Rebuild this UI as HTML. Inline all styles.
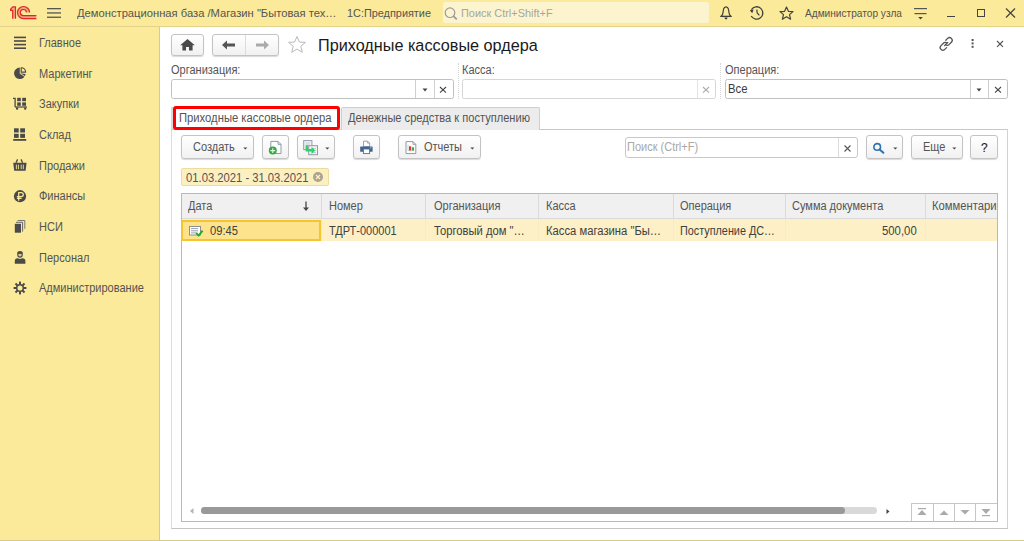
<!DOCTYPE html>
<html><head><meta charset="utf-8">
<style>
*{box-sizing:border-box;margin:0;padding:0}
html,body{width:1024px;height:541px;overflow:hidden;background:#fff;font-family:"Liberation Sans",sans-serif}
.a{position:absolute;white-space:nowrap;line-height:1}
svg.a{overflow:visible}
</style></head><body>
<div class="a" style="left:0px;top:0px;width:1024px;height:26px;background:#fbea99"></div>
<div class="a" style="left:0px;top:26px;width:1024px;height:1px;background:#e2d28a"></div>
<svg class="a" style="left:0px;top:0px" width="42" height="26" viewBox="0 0 42 26"><path d="M10.6 10.4 L10.6 9.2 L12.7 6.9 H15.5 V18.6 H12.7 V10.4 Z" fill="#efa57a"/>
<path d="M29.6 12.4 A6.05 6.05 0 1 0 23.4 18.6 H36.2 V15.6 H23.4 A3.05 3.05 0 1 1 26.4 12.4 Z" fill="#efa57a"/>
<g stroke="#e0262a" stroke-width="1.2" fill="none" stroke-linejoin="round">
<path d="M12.7 18.8 V10.4 H10.6 V9.2 L12.7 6.9 H15.5 V18.8"/>
<path d="M29.6 12.4 A6.05 6.05 0 1 0 23.4 18.6 H36.4"/>
<path d="M26.4 12.4 A3.05 3.05 0 1 0 23.4 15.6 H36.4"/>
</g></svg>
<svg class="a" style="left:47px;top:7px" width="15" height="12" viewBox="0 0 15 12"><g fill="#555"><rect x="0" y="1" width="14" height="1.3"/><rect x="0" y="5.3" width="14" height="1.3"/><rect x="0" y="9.6" width="14" height="1.3"/></g></svg>
<div class="a" style="left:76.7px;top:8px;font-size:11.8px;color:#545454;font-weight:normal;transform-origin:0 0;transform:scaleX(0.9491);">Демонстрационная база /Магазин "Бытовая тех…</div>
<div class="a" style="left:347.0px;top:8px;font-size:11.5px;color:#545454;font-weight:normal;transform-origin:0 0;transform:scaleX(0.9461);">1С:Предприятие</div>
<div class="a" style="left:443px;top:2px;width:266px;height:21px;background:#fcf4cf;border-radius:2px"></div>
<svg class="a" style="left:444px;top:7px" width="14" height="13" viewBox="0 0 14 13"><circle cx="6" cy="5.7" r="4.8" fill="none" stroke="#9a9a9a" stroke-width="1.2"/><path d="M9.4 9.2 L12.8 12.4" stroke="#9a9a9a" stroke-width="1.8"/></svg>
<div class="a" style="left:461.1px;top:8px;font-size:11.8px;color:#a6a6a0;font-weight:normal;transform-origin:0 0;transform:scaleX(0.9261);">Поиск Ctrl+Shift+F</div>
<svg class="a" style="left:710px;top:0px" width="30" height="26" viewBox="0 0 30 26"><path d="M16 6.8 Q14.2 6.8 13.6 9 L12.8 13.6 Q12.4 15.4 11 16.3 H21 Q19.6 15.4 19.2 13.6 L18.4 9 Q17.8 6.8 16 6.8 Z" fill="none" stroke="#3f3f3f" stroke-width="1.2" stroke-linejoin="round"/><path d="M10.4 16.5 H21.6" stroke="#3f3f3f" stroke-width="1.1"/><path d="M14.4 17.6 H17.6 Q17.2 19.5 16 19.5 Q14.8 19.5 14.4 17.6 Z" fill="#3f3f3f"/></svg>
<svg class="a" style="left:740px;top:0px" width="30" height="26" viewBox="0 0 30 26"><path d="M11.4 9.6 A6.2 6.2 0 1 1 11.2 16" fill="none" stroke="#3f3f3f" stroke-width="1.3"/><path d="M9.8 10.2 L13.6 9.4 L12.2 13.2 Z" fill="#3f3f3f"/><path d="M16.8 9.6 L17.2 13 L19.4 15.4" fill="none" stroke="#3f3f3f" stroke-width="1.2"/></svg>
<svg class="a" style="left:779px;top:6px" width="15" height="14" viewBox="0 0 15 14"><path d="M7.5 1 L9.4 5.3 L14 5.6 L10.5 8.6 L11.6 13.2 L7.5 10.7 L3.4 13.2 L4.5 8.6 L1 5.6 L5.6 5.3 Z" fill="none" stroke="#444" stroke-width="1.2" stroke-linejoin="round"/></svg>
<div class="a" style="left:804.6px;top:8px;font-size:10.8px;color:#545454;font-weight:normal;transform-origin:0 0;transform:scaleX(0.9378);">Администратор узла</div>
<svg class="a" style="left:913px;top:7px" width="15" height="13" viewBox="0 0 15 13"><rect x="1" y="1" width="13" height="1.2" fill="#555"/><rect x="1.5" y="6" width="12" height="1.2" fill="#555"/><path d="M5.2 10 H9.8 L7.5 12.4 Z" fill="#444"/></svg>
<div class="a" style="left:947px;top:16px;width:8px;height:1.2px;background:#444"></div>
<div class="a" style="left:977px;top:9px;width:8px;height:8px;border:1.2px solid #444"></div>
<svg class="a" style="left:1005px;top:8px" width="11" height="10" viewBox="0 0 11 10"><path d="M1 0.5 L10 9.5 M10 0.5 L1 9.5" stroke="#444" stroke-width="1.2"/></svg>
<div class="a" style="left:0px;top:27px;width:159px;height:514px;background:#fbea99"></div>
<div class="a" style="left:159px;top:27px;width:1px;height:514px;background:#dccb86"></div>
<div class="a" style="left:0px;top:540px;width:1024px;height:1px;background:#dccb85"></div>
<div class="a" style="left:38.8px;top:37px;font-size:12.0px;color:#545454;font-weight:normal;transform-origin:0 0;transform:scaleX(0.9165);">Главное</div>
<div class="a" style="left:38.8px;top:68px;font-size:12.0px;color:#545454;font-weight:normal;transform-origin:0 0;transform:scaleX(0.9167);">Маркетинг</div>
<div class="a" style="left:38.8px;top:98px;font-size:12.0px;color:#545454;font-weight:normal;transform-origin:0 0;transform:scaleX(0.9168);">Закупки</div>
<div class="a" style="left:38.8px;top:129px;font-size:12.0px;color:#545454;font-weight:normal;transform-origin:0 0;transform:scaleX(0.9168);">Склад</div>
<div class="a" style="left:38.8px;top:160px;font-size:12.0px;color:#545454;font-weight:normal;transform-origin:0 0;transform:scaleX(0.9168);">Продажи</div>
<div class="a" style="left:38.8px;top:190px;font-size:12.0px;color:#545454;font-weight:normal;transform-origin:0 0;transform:scaleX(0.9166);">Финансы</div>
<div class="a" style="left:38.8px;top:221px;font-size:12.0px;color:#545454;font-weight:normal;transform-origin:0 0;transform:scaleX(0.9164);">НСИ</div>
<div class="a" style="left:38.8px;top:252px;font-size:12.0px;color:#545454;font-weight:normal;transform-origin:0 0;transform:scaleX(0.9166);">Персонал</div>
<div class="a" style="left:38.8px;top:282px;font-size:12.0px;color:#545454;font-weight:normal;transform-origin:0 0;transform:scaleX(0.9167);">Администрирование</div>
<svg class="a" style="left:0px;top:0px" width="40" height="320" viewBox="0 0 40 320"><rect x="14" y="36.6" width="12" height="1.6" fill="#4a4a4a"/><rect x="14" y="40.2" width="12" height="1.6" fill="#4a4a4a"/><rect x="14" y="43.8" width="12" height="1.6" fill="#4a4a4a"/><rect x="14" y="47.4" width="12" height="1.6" fill="#4a4a4a"/><path d="M19.8 73.3 V67.5 A5.8 5.8 0 1 0 25.6 73.9 Z" fill="#4a4a4a"/><path d="M19.8 73.3 L25.6 77.0" stroke="#fbea99" stroke-width="0.9"/><path d="M21.2 72.1 V67.7 A4.4 4.4 0 0 1 25.6 72.1 Z" fill="none" stroke="#4a4a4a" stroke-width="1.1"/><path d="M13 98.4 H15.1 V107" fill="none" stroke="#4a4a4a" stroke-width="1.3"/><rect x="17.2" y="97.8" width="3.6" height="3.4" fill="#4a4a4a"/><rect x="22.2" y="97.8" width="3.8" height="3.4" fill="#4a4a4a"/><rect x="17.2" y="102.4" width="3.6" height="3.4" fill="#4a4a4a"/><rect x="22.2" y="102.4" width="3.8" height="3.4" fill="#4a4a4a"/><rect x="15" y="106.4" width="12" height="1.2" fill="#4a4a4a"/><rect x="16" y="107.2" width="2.2" height="2.6" rx="0.8" fill="#4a4a4a"/><rect x="24.1" y="107.2" width="2.2" height="2.6" rx="0.8" fill="#4a4a4a"/><rect x="14" y="128.3" width="4.7" height="4.2" fill="#4a4a4a"/><rect x="20.2" y="128.3" width="4.8" height="4.2" fill="#4a4a4a"/><rect x="14" y="133.8" width="4.7" height="4.1" fill="#4a4a4a"/><rect x="20.2" y="133.8" width="4.8" height="4.1" fill="#4a4a4a"/><rect x="13.2" y="139" width="13" height="1.8" fill="#4a4a4a"/><path d="M17.6 159.4 L16 162.8 M21 159.4 L22.6 162.8" stroke="#4a4a4a" stroke-width="1.3"/><path d="M13.2 162.8 H26.6 L25.6 170.8 H14.2 Z" fill="#4a4a4a"/><path d="M16.4 164.6 V169.2 M18.4 164.6 V169.2 M21.2 164.6 V169.2 M23.3 164.6 V169.2" stroke="#fbea99" stroke-width="0.9"/><circle cx="20" cy="196.2" r="6.1" fill="#4a4a4a"/><path d="M18.7 200.8 V192.6 H21.3 A2 2 0 0 1 21.3 196.6 H16.9 M16.9 198.3 H21.6" fill="none" stroke="#fbea99" stroke-width="1.2"/><path d="M17.6 220.5 H24.8 V228.8" fill="none" stroke="#777" stroke-width="1"/><path d="M16 222.3 H22.6 V231.6" fill="none" stroke="#666" stroke-width="1"/><rect x="14.8" y="223.8" width="6.2" height="8.9" fill="#4a4a4a"/><path d="M17.2 254.6 V252.8 Q17.2 251 20 251 Q22.8 251 22.8 252.8 V254.6 Q22.8 257.8 20 257.8 Q17.2 257.8 17.2 254.6 Z" fill="#4a4a4a"/><path d="M18.2 254.2 Q20 253.2 21.8 254.2 Q21.8 256.6 20 256.6 Q18.2 256.6 18.2 254.2 Z" fill="#fbea99" opacity="0.8"/><path d="M14.8 263.8 V261 Q14.8 258.6 17.6 258.3 L20 259 L22.4 258.3 Q25.4 258.6 25.4 261 V263.8 Z" fill="#4a4a4a"/><rect x="19" y="281.6" width="2" height="3" transform="rotate(0 20 288)" fill="#4a4a4a"/><rect x="19" y="281.6" width="2" height="3" transform="rotate(45 20 288)" fill="#4a4a4a"/><rect x="19" y="281.6" width="2" height="3" transform="rotate(90 20 288)" fill="#4a4a4a"/><rect x="19" y="281.6" width="2" height="3" transform="rotate(135 20 288)" fill="#4a4a4a"/><rect x="19" y="281.6" width="2" height="3" transform="rotate(180 20 288)" fill="#4a4a4a"/><rect x="19" y="281.6" width="2" height="3" transform="rotate(225 20 288)" fill="#4a4a4a"/><rect x="19" y="281.6" width="2" height="3" transform="rotate(270 20 288)" fill="#4a4a4a"/><rect x="19" y="281.6" width="2" height="3" transform="rotate(315 20 288)" fill="#4a4a4a"/><circle cx="20" cy="288" r="3.3" fill="none" stroke="#4a4a4a" stroke-width="1.5"/></svg>
<div class="a" style="left:171px;top:34px;width:33px;height:22px;border:1px solid #c3c3c3;border-radius:3px;background:linear-gradient(#ffffff,#f1f1f1);box-shadow:0 1px 1px rgba(0,0,0,0.15)"></div>
<svg class="a" style="left:179px;top:38px" width="17" height="14" viewBox="0 0 17 14"><path d="M8.5 1 L1.2 7.2 H3.4 V12.5 H7 V9 H10 V12.5 H13.6 V7.2 H15.8 Z" fill="#4a4a4a"/></svg>
<div class="a" style="left:212px;top:34px;width:67px;height:22px;border:1px solid #c3c3c3;border-radius:3px;background:linear-gradient(#ffffff,#f1f1f1);box-shadow:0 1px 1px rgba(0,0,0,0.15)"></div>
<div class="a" style="left:245px;top:35px;width:1px;height:20px;background:#dcdcdc"></div>
<svg class="a" style="left:221px;top:39px" width="16" height="12" viewBox="0 0 16 12"><path d="M1 6 L6 1.5 V4.6 H14 V7.4 H6 V10.5 Z" fill="#555"/></svg>
<svg class="a" style="left:254px;top:39px" width="16" height="12" viewBox="0 0 16 12"><path d="M15 6 L10 1.5 V4.6 H2 V7.4 H10 V10.5 Z" fill="#aaa"/></svg>
<svg class="a" style="left:287px;top:35px" width="20" height="19" viewBox="0 0 20 19"><path d="M10 1.5 L12.4 7 L18.4 7.4 L13.8 11.3 L15.3 17.3 L10 14.1 L4.7 17.3 L6.2 11.3 L1.6 7.4 L7.6 7 Z" fill="none" stroke="#b9b9b9" stroke-width="1"/></svg>
<div class="a" style="left:318.0px;top:37px;font-size:17.4px;color:#1a1a1a;font-weight:normal;transform-origin:0 0;transform:scaleX(0.9325);">Приходные кассовые ордера</div>
<svg class="a" style="left:938px;top:36px" width="17" height="16" viewBox="0 0 17 16"><g fill="none" stroke="#555" stroke-width="1.3" stroke-linecap="round"><path d="M7.8 4.2 L9.6 2.4 A2.4 2.4 0 0 1 13.4 6.2 L11 8.6 A2.4 2.4 0 0 1 7.6 8.8"/><path d="M8.6 11.6 L6.8 13.4 A2.4 2.4 0 0 1 3 9.6 L5.4 7.2 A2.4 2.4 0 0 1 8.8 7"/><path d="M6.6 9.6 L9.8 6.4"/></g></svg>
<svg class="a" style="left:970px;top:37px" width="5" height="12" viewBox="0 0 5 12"><g fill="#555"><rect x="1.6" y="2" width="2" height="2"/><rect x="1.6" y="5.4" width="2" height="2"/><rect x="1.6" y="8.8" width="2" height="2"/></g></svg>
<svg class="a" style="left:995px;top:39px" width="10" height="10" viewBox="0 0 10 10"><path d="M2 2 L8 7.8 M8 2 L2 7.8" stroke="#555" stroke-width="1.15"/></svg>
<div class="a" style="left:170.5px;top:64px;font-size:12.0px;color:#545454;font-weight:normal;transform-origin:0 0;transform:scaleX(0.9166);">Организация:</div>
<div class="a" style="left:171px;top:79px;width:283px;height:20px;border:1px solid #c0c0c0;border-radius:2.5px;background:#fff"></div>
<div class="a" style="left:415px;top:80px;width:1px;height:18px;background:#cfcfcf"></div>
<div class="a" style="left:434px;top:80px;width:1px;height:18px;background:#cfcfcf"></div>
<svg class="a" style="left:421px;top:87px" width="8" height="6" viewBox="0 0 8 6"><path d="M1.5 1.5 H6.5 L4 4.5 Z" fill="#444"/></svg>
<svg class="a" style="left:439.3px;top:85.9px" width="8" height="8" viewBox="0 0 8 8"><path d="M1 1 L7 6.6 M7 1 L1 6.6" stroke="#444" stroke-width="1.05"/></svg>
<div class="a" style="left:458px;top:63px;width:1px;height:36px;border-left:1px dotted #d6d6d6"></div>
<div class="a" style="left:462.2px;top:64px;font-size:12.0px;color:#545454;font-weight:normal;transform-origin:0 0;transform:scaleX(0.9168);">Касса:</div>
<div class="a" style="left:462px;top:79px;width:254px;height:20px;border:1px solid #d6d6d6;border-radius:2.5px;background:#fff"></div>
<div class="a" style="left:697px;top:80px;width:1px;height:18px;background:#e4e4e4"></div>
<svg class="a" style="left:702.2px;top:86px" width="8" height="8" viewBox="0 0 8 8"><path d="M1 1 L7 6.6 M7 1 L1 6.6" stroke="#aaa" stroke-width="1.05"/></svg>
<div class="a" style="left:720px;top:63px;width:1px;height:36px;border-left:1px dotted #d6d6d6"></div>
<div class="a" style="left:725.2px;top:64px;font-size:12.0px;color:#545454;font-weight:normal;transform-origin:0 0;transform:scaleX(0.9167);">Операция:</div>
<div class="a" style="left:725px;top:79px;width:283px;height:20px;border:1px solid #c0c0c0;border-radius:2.5px;background:#fff"></div>
<div class="a" style="left:970px;top:80px;width:1px;height:18px;background:#cfcfcf"></div>
<div class="a" style="left:988px;top:80px;width:1px;height:18px;background:#cfcfcf"></div>
<svg class="a" style="left:975px;top:87px" width="8" height="6" viewBox="0 0 8 6"><path d="M1.5 1.5 H6.5 L4 4.5 Z" fill="#444"/></svg>
<svg class="a" style="left:993.7px;top:85.9px" width="8" height="8" viewBox="0 0 8 8"><path d="M1 1 L7 6.6 M7 1 L1 6.6" stroke="#444" stroke-width="1.05"/></svg>
<div class="a" style="left:727.8px;top:83px;font-size:12px;color:#3a3a3a;font-weight:normal;transform-origin:0 0;transform:scaleX(0.9426);">Все</div>
<div class="a" style="left:171px;top:129px;width:837px;height:400px;border:1px solid #d2d2d2;border-left-color:#dcdcdc;border-bottom-color:#c4c4c4;border-top-color:#c8c8c8;background:#fff"></div>
<div class="a" style="left:171px;top:107px;width:2px;height:22px;background:#d9d9d9"></div>
<div class="a" style="left:341px;top:107px;width:199px;height:23px;border:1px solid #cfcfcf;border-bottom:none;border-radius:2px 2px 0 0;background:#ececec"></div>
<div class="a" style="left:173px;top:106px;width:167px;height:24px;border:3px solid #ff0000;border-radius:3px;background:#fff"></div>
<div class="a" style="left:178.7px;top:112px;font-size:12.272727272727273px;color:#545454;font-weight:normal;transform-origin:0 0;transform:scaleX(0.9167);">Приходные кассовые ордера</div>
<div class="a" style="left:348.2px;top:112px;font-size:12.109090909090908px;color:#545454;font-weight:normal;transform-origin:0 0;transform:scaleX(0.9168);">Денежные средства к поступлению</div>
<div class="a" style="left:181px;top:135px;width:73px;height:24px;border:1px solid #c3c3c3;border-radius:3px;background:linear-gradient(#ffffff,#f1f1f1);box-shadow:0 1px 1px rgba(0,0,0,0.15)"></div>
<div class="a" style="left:193.2px;top:141px;font-size:12.0px;color:#545454;font-weight:normal;transform-origin:0 0;transform:scaleX(0.9168);">Создать</div>
<svg class="a" style="left:242.6px;top:146.6px" width="6" height="4" viewBox="0 0 6 4"><path d="M0.3 0.4 H4.3 L2.3 2.6 Z" fill="#444"/></svg>
<div class="a" style="left:262px;top:135px;width:27px;height:24px;border:1px solid #c3c3c3;border-radius:3px;background:linear-gradient(#ffffff,#f1f1f1);box-shadow:0 1px 1px rgba(0,0,0,0.15)"></div>
<svg class="a" style="left:262px;top:134px" width="26" height="24" viewBox="0 0 26 24"><path d="M8.8 7.4 H16 L19 10.4 V19.5 H8.8 Z" fill="#fdfdfd" stroke="#8e9bab" stroke-width="1"/><path d="M16 7.4 V10.4 H19" fill="none" stroke="#8e9bab" stroke-width="0.9"/><circle cx="10.8" cy="16.6" r="4" fill="#2fae3f"/><path d="M10.8 14.2 V19 M8.4 16.6 H13.2" stroke="#e8f8ea" stroke-width="1.1"/></svg>
<div class="a" style="left:297px;top:135px;width:38px;height:24px;border:1px solid #c3c3c3;border-radius:3px;background:linear-gradient(#ffffff,#f1f1f1);box-shadow:0 1px 1px rgba(0,0,0,0.15)"></div>
<svg class="a" style="left:297px;top:134px" width="36" height="24" viewBox="0 0 36 24"><rect x="6.7" y="6.6" width="8.2" height="9" fill="#f4f4f4" stroke="#8e9bab" stroke-width="1"/><path d="M8.5 9 H13 M8.5 11 H13 M8.5 13 H13" stroke="#b8c2cc" stroke-width="0.8"/><rect x="11.7" y="11.7" width="8.8" height="9" fill="#f4f4f4" stroke="#8e9bab" stroke-width="1"/><path d="M14.5 14.5 H19 M14.5 16.5 H19 M14.5 18.5 H19" stroke="#b8c2cc" stroke-width="0.8"/><path d="M8.6 11.2 H11 V15 H14.6 V12.8 L18.2 16.4 L14.6 20 V17.6 H8.6 Z" fill="#2ed06a"/></svg>
<svg class="a" style="left:324.6px;top:146.6px" width="6" height="4" viewBox="0 0 6 4"><path d="M0.3 0.4 H4.3 L2.3 2.6 Z" fill="#444"/></svg>
<div class="a" style="left:353px;top:135px;width:27px;height:24px;border:1px solid #c3c3c3;border-radius:3px;background:linear-gradient(#ffffff,#f1f1f1);box-shadow:0 1px 1px rgba(0,0,0,0.15)"></div>
<svg class="a" style="left:350px;top:134px" width="30" height="24" viewBox="0 0 30 24"><path d="M13.5 7.2 H17.6 L19.6 9.2 V12.6 H13.5 Z" fill="#fff" stroke="#8e9bab" stroke-width="0.9"/><path d="M17.6 7.2 V9.2 H19.6" fill="none" stroke="#8e9bab" stroke-width="0.8"/><path d="M10.8 12.6 H22 Q22.6 12.6 22.6 13.2 V17.2 Q22.6 17.8 22 17.8 H10.8 Q10.2 17.8 10.2 17.2 V13.2 Q10.2 12.6 10.8 12.6 Z" fill="#3e6591"/><circle cx="20.8" cy="13.8" r="0.6" fill="#dfe8f0"/><rect x="13.4" y="15" width="6.2" height="4.6" fill="#fff" stroke="#4c729a" stroke-width="0.9"/></svg>
<div class="a" style="left:398px;top:135px;width:83px;height:24px;border:1px solid #c3c3c3;border-radius:3px;background:linear-gradient(#ffffff,#f1f1f1);box-shadow:0 1px 1px rgba(0,0,0,0.15)"></div>
<svg class="a" style="left:400px;top:134px" width="22" height="24" viewBox="0 0 22 24"><path d="M6 7.6 H13 L15.8 10.4 V19.6 H6 Z" fill="#fdfdfd" stroke="#8e9bab" stroke-width="1"/><path d="M13 7.6 V10.4 H15.8" fill="none" stroke="#8e9bab" stroke-width="0.9"/><path d="M8 10.6 V16.6 H14.6" fill="none" stroke="#b9b9b9" stroke-width="0.6"/><rect x="9" y="12.3" width="2.1" height="4.2" fill="#e8322a"/><rect x="11.9" y="13.3" width="2.1" height="3.2" fill="#36a844"/></svg>
<div class="a" style="left:424.4px;top:141px;font-size:12.0px;color:#545454;font-weight:normal;transform-origin:0 0;transform:scaleX(0.9168);">Отчеты</div>
<svg class="a" style="left:469.6px;top:146.6px" width="6" height="4" viewBox="0 0 6 4"><path d="M0.3 0.4 H4.3 L2.3 2.6 Z" fill="#444"/></svg>
<div class="a" style="left:625px;top:137px;width:233px;height:21px;border:1px solid #c8c8c8;border-radius:3px;background:#fff"></div>
<div class="a" style="left:838px;top:138px;width:1px;height:19px;background:#dcdcdc"></div>
<div class="a" style="left:627.4px;top:141px;font-size:12.0px;color:#a8a8a8;font-weight:normal;transform-origin:0 0;transform:scaleX(0.9168);">Поиск (Ctrl+F)</div>
<svg class="a" style="left:843px;top:144px" width="9" height="9" viewBox="0 0 9 9"><path d="M1.5 1.5 L7.5 7.5 M7.5 1.5 L1.5 7.5" stroke="#555" stroke-width="1.1"/></svg>
<div class="a" style="left:866px;top:135px;width:37px;height:24px;border:1px solid #c3c3c3;border-radius:3px;background:linear-gradient(#ffffff,#f1f1f1);box-shadow:0 1px 1px rgba(0,0,0,0.15)"></div>
<svg class="a" style="left:872px;top:142px" width="14" height="12" viewBox="0 0 14 12"><circle cx="5.2" cy="4.9" r="3.3" fill="none" stroke="#2f72b4" stroke-width="1.6"/><path d="M7.6 7.4 L11.4 10.8" stroke="#2f72b4" stroke-width="2" stroke-linecap="round"/></svg>
<svg class="a" style="left:892.6px;top:146.6px" width="6" height="4" viewBox="0 0 6 4"><path d="M0.3 0.4 H4.3 L2.3 2.6 Z" fill="#444"/></svg>
<div class="a" style="left:911px;top:135px;width:52px;height:24px;border:1px solid #c3c3c3;border-radius:3px;background:linear-gradient(#ffffff,#f1f1f1);box-shadow:0 1px 1px rgba(0,0,0,0.15)"></div>
<div class="a" style="left:922.9px;top:141px;font-size:12.0px;color:#545454;font-weight:normal;transform-origin:0 0;transform:scaleX(0.9168);">Еще</div>
<svg class="a" style="left:951.6px;top:146.6px" width="6" height="4" viewBox="0 0 6 4"><path d="M0.3 0.4 H4.3 L2.3 2.6 Z" fill="#444"/></svg>
<div class="a" style="left:970px;top:135px;width:28px;height:24px;border:1px solid #c3c3c3;border-radius:3px;background:linear-gradient(#ffffff,#f1f1f1);box-shadow:0 1px 1px rgba(0,0,0,0.15)"></div>
<div class="a" style="left:980.6px;top:141px;font-size:13.2px;color:#222;font-weight:normal;transform-origin:0 0;transform:scaleX(0.8987);-webkit-text-stroke:0.15px #222">?</div>
<div class="a" style="left:181px;top:168px;width:148px;height:18px;background:#fcefc0;border:1px solid #ecdca0;border-radius:2px"></div>
<div class="a" style="left:185.7px;top:172px;font-size:12.109090909090908px;color:#545454;font-weight:normal;transform-origin:0 0;transform:scaleX(0.9294);">01.03.2021 - 31.03.2021</div>
<svg class="a" style="left:312px;top:171px" width="12" height="12" viewBox="0 0 12 12"><circle cx="6" cy="6" r="5" fill="#a9a390"/><path d="M4 4 L8 8 M8 4 L4 8" stroke="#fcefc0" stroke-width="1.3"/></svg>
<div class="a" style="left:181px;top:193px;width:817px;height:329px;border:1px solid #b9b9b9;background:#fff"></div>
<div class="a" style="left:182px;top:194px;width:815px;height:24px;background:#f0f0f0"></div>
<div class="a" style="left:182px;top:218px;width:815px;height:1px;background:#dadada"></div>
<div class="a" style="left:321px;top:194px;width:1px;height:24px;background:#dadada"></div>
<div class="a" style="left:425px;top:194px;width:1px;height:24px;background:#dadada"></div>
<div class="a" style="left:538px;top:194px;width:1px;height:24px;background:#dadada"></div>
<div class="a" style="left:673px;top:194px;width:1px;height:24px;background:#dadada"></div>
<div class="a" style="left:785px;top:194px;width:1px;height:24px;background:#dadada"></div>
<div class="a" style="left:925px;top:194px;width:1px;height:24px;background:#dadada"></div>
<div class="a" style="left:182px;top:219px;width:815px;height:22px;background:#fdf0c6"></div>
<div class="a" style="left:321px;top:219px;width:1px;height:22px;background:#f8ebc4"></div>
<div class="a" style="left:425px;top:219px;width:1px;height:22px;background:#f8ebc4"></div>
<div class="a" style="left:538px;top:219px;width:1px;height:22px;background:#f8ebc4"></div>
<div class="a" style="left:673px;top:219px;width:1px;height:22px;background:#f8ebc4"></div>
<div class="a" style="left:785px;top:219px;width:1px;height:22px;background:#f8ebc4"></div>
<div class="a" style="left:925px;top:219px;width:1px;height:22px;background:#f8ebc4"></div>
<div class="a" style="left:181px;top:220px;width:140px;height:21px;background:#fce38c;border:2px solid #f5c431"></div>
<div class="a" style="left:187.7px;top:200px;font-size:12.0px;color:#545454;font-weight:normal;transform-origin:0 0;transform:scaleX(0.9165);">Дата</div>
<svg class="a" style="left:302px;top:201px" width="8" height="11" viewBox="0 0 8 11"><path d="M4 0.5 V8" stroke="#444" stroke-width="1.3"/><path d="M1 6.5 H7 L4 10 Z" fill="#444"/></svg>
<div class="a" style="left:328.9px;top:200px;font-size:12.0px;color:#545454;font-weight:normal;transform-origin:0 0;transform:scaleX(0.9167);">Номер</div>
<div class="a" style="left:433.7px;top:200px;font-size:12.0px;color:#545454;font-weight:normal;transform-origin:0 0;transform:scaleX(0.9167);">Организация</div>
<div class="a" style="left:545.7px;top:200px;font-size:12.0px;color:#545454;font-weight:normal;transform-origin:0 0;transform:scaleX(0.9169);">Касса</div>
<div class="a" style="left:680.0px;top:200px;font-size:12.0px;color:#545454;font-weight:normal;transform-origin:0 0;transform:scaleX(0.9168);">Операция</div>
<div class="a" style="left:792.2px;top:200px;font-size:12.0px;color:#545454;font-weight:normal;transform-origin:0 0;transform:scaleX(0.9167);">Сумма документа</div>
<div class="a" style="left:925px;top:194px;width:72px;height:30px;overflow:hidden">
<div class="a" style="left:7.0px;top:6px;font-size:12.0px;color:#545454;font-weight:normal;transform-origin:0 0;transform:scaleX(0.9371);">Комментарий</div>
</div>
<svg class="a" style="left:188px;top:225px" width="17" height="13" viewBox="0 0 17 13"><rect x="1.5" y="1.5" width="11" height="8.5" fill="#fff" stroke="#8f8f8f" stroke-width="1"/><path d="M3 3.6 H10 M3 5.8 H10 M3 7.9 H8.5" stroke="#8797aa" stroke-width="0.9"/><path d="M8.2 7.9 L10.6 10.6 L14.6 5.6" fill="none" stroke="#25a82b" stroke-width="1.9" stroke-linejoin="round"/></svg>
<div class="a" style="left:210.2px;top:225px;font-size:12.0px;color:#404040;font-weight:normal;transform-origin:0 0;transform:scaleX(0.9290);">09:45</div>
<div class="a" style="left:329.4px;top:225px;font-size:12.0px;color:#404040;font-weight:normal;transform-origin:0 0;transform:scaleX(0.9147);">ТДРТ-000001</div>
<div class="a" style="left:433.7px;top:225px;font-size:12.0px;color:#404040;font-weight:normal;transform-origin:0 0;transform:scaleX(0.9341);">Торговый дом "…</div>
<div class="a" style="left:545.7px;top:225px;font-size:12.0px;color:#404040;font-weight:normal;transform-origin:0 0;transform:scaleX(0.9368);">Касса магазина "Бы…</div>
<div class="a" style="left:680.0px;top:225px;font-size:12.0px;color:#404040;font-weight:normal;transform-origin:0 0;transform:scaleX(0.9018);">Поступление ДС…</div>
<div class="a" style="left:881.6px;top:225px;font-size:12.0px;color:#404040;font-weight:normal;transform-origin:0 0;transform:scaleX(0.9454);">500,00</div>
<svg class="a" style="left:189px;top:507px" width="6" height="8" viewBox="0 0 6 8"><path d="M4.5 1 V7 L1 4 Z" fill="#b5b5b5"/></svg>
<div class="a" style="left:201px;top:507px;width:676px;height:7px;background:#d9d9d9;border-radius:3.5px"></div>
<div class="a" style="left:201px;top:507px;width:644px;height:7px;background:#999;border-radius:3.5px"></div>
<svg class="a" style="left:885px;top:508px" width="6" height="7" viewBox="0 0 6 7"><path d="M1.5 1 V6 L4.5 3.5 Z" fill="#444"/></svg>
<div class="a" style="left:911px;top:503px;width:86px;height:18px;border-left:1px solid #c6c6c6;border-top:1px solid #c6c6c6;background:#fff"></div>
<div class="a" style="left:933px;top:503px;width:1px;height:19px;background:#c6c6c6"></div>
<div class="a" style="left:954px;top:503px;width:1px;height:19px;background:#c6c6c6"></div>
<div class="a" style="left:975px;top:503px;width:1px;height:19px;background:#c6c6c6"></div>
<svg class="a" style="left:915px;top:507px" width="14" height="10" viewBox="0 0 14 10"><rect x="3" y="1" width="8" height="1.2" fill="#aaa"/><path d="M2.5 8 H11.5 L7 3 Z" fill="#aaa"/></svg>
<svg class="a" style="left:937px;top:507px" width="14" height="10" viewBox="0 0 14 10"><path d="M2.5 8 H11.5 L7 3.5 Z" fill="#aaa"/></svg>
<svg class="a" style="left:958px;top:507px" width="14" height="10" viewBox="0 0 14 10"><path d="M2.5 3 H11.5 L7 7.5 Z" fill="#aaa"/></svg>
<svg class="a" style="left:979px;top:507px" width="14" height="10" viewBox="0 0 14 10"><path d="M2.5 2 H11.5 L7 7 Z" fill="#aaa"/><rect x="3" y="8" width="8" height="1.2" fill="#aaa"/></svg>
</body></html>
